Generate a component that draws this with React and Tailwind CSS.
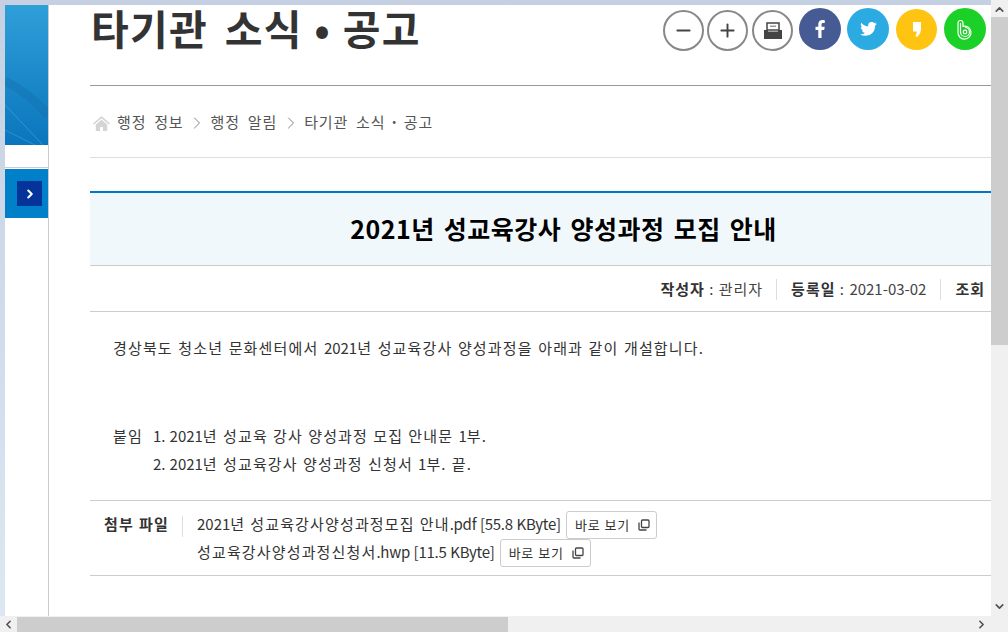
import React from "react";
import { ChevronUp, ChevronDown, ChevronLeft, ChevronRight, Minus, Plus } from "lucide-react";

function Round({ children, className }) {
  return <div className={"flex items-center justify-center rounded-full shrink-0 " + className}>{children}</div>;
}

function N({ children }) {
  return <span className="tracking-normal">{children}</span>;
}

function L({ children }) {
  return <span className="tracking-[-0.25px]">{children}</span>;
}

function ViewBtn() {
  return (
    <span className="inline-flex items-center h-[28px] ml-[5px] pl-[8px] pr-[6px] gap-[8px] border border-[#ccc] rounded-[3px] text-[13px] text-[#333] tracking-[0.75px] [word-spacing:0.5px] bg-white">
      바로 보기
      <svg width="12" height="12" viewBox="0 0 12 12" fill="none" stroke="#444" strokeWidth="1.3"><rect x="3.5" y="1" width="7.5" height="7.5" rx="1"/><path d="M1 3.5v6.5a1 1 0 0 0 1 1h6.5"/></svg>
    </span>
  );
}

export default function App() {
  return (
    <div className="w-[1008px] h-[632px] flex flex-col overflow-hidden bg-[#f0f0f0] text-[#333]" style={{ fontFamily: '"Noto Sans CJK KR", "Noto Sans", sans-serif' }}>
      <div className="flex h-[616px]">
        <div className="w-[991px] h-[616px] pt-[5px] pl-[5px] bg-linear-to-b from-[#c5d0e2] to-[#dce7f3] overflow-hidden">
          <div className="flex h-[611px] bg-white">
            {/* sidebar */}
            <aside className="w-[44px] shrink-0 border-r border-[#ccc] flex flex-col">
              <div className="h-[140px] overflow-hidden">
                <svg width="43" height="140" viewBox="0 0 43 140" preserveAspectRatio="none">
                  <defs>
                    <linearGradient id="g" x1="0" y1="0" x2="0" y2="1"><stop offset="0" stopColor="#2f9fd8"/><stop offset="1" stopColor="#0a75bd"/></linearGradient>
                  </defs>
                  <rect width="43" height="140" fill="url(#g)"/>
                  <path d="M0 76 Q24 88 43 110" stroke="#1470ac" strokeOpacity=".4" strokeWidth="9" fill="none"/>
                  <path d="M0 100 L38 140" stroke="#5cb0de" strokeOpacity=".5" strokeWidth="1" fill="none"/>
                  <path d="M0 125 L30 140" stroke="#5cb0de" strokeOpacity=".45" strokeWidth="1" fill="none"/>
                </svg>
              </div>
              <div className="h-[22px]"></div>
              <div className="h-px bg-[#ccc]"></div>
              <div className="h-px"></div>
              <div className="h-[49px] bg-[#0080c8] flex items-center pl-[12px]">
                <div className="w-[25px] h-[25px] bg-[#04349a] flex items-center justify-center">
                  <ChevronRight size={14} color="#fff" strokeWidth={3.5} />
                </div>
              </div>
            </aside>
            {/* content */}
            <main className="flex-1 pl-[41px] min-w-0">
              <div className="h-[81px] border-b border-[#999] flex justify-between items-start">
                <h1 className="text-[41px] font-bold leading-[44px] text-[#333] whitespace-nowrap tracking-[1.3px] [word-spacing:6px] pl-[1px]">타기관 소식<span className="[word-spacing:1px]"> • </span>공고</h1>
                <div className="flex items-center mt-[2px] w-[328px] shrink-0">
                  <Round className="w-[41px] h-[41px] mt-[3px] border-2 border-[#888] bg-white"><Minus size={21} color="#444" strokeWidth={2.2} /></Round>
                  <Round className="w-[41px] h-[41px] mt-[3px] border-2 border-[#888] bg-white ml-[3px]"><Plus size={21} color="#444" strokeWidth={2.2} /></Round>
                  <Round className="w-[41px] h-[41px] mt-[3px] border-2 border-[#888] bg-white ml-[4px]">
                    <svg width="20" height="18" viewBox="0 0 20 18"><path d="M4 1h12v7H4z" fill="#fff" stroke="#444" strokeWidth="1.5"/><path d="M7 3.500h6v1.500H7z" fill="#999"/><path d="M1 8h4v1.500h10V8h4v9H1z" fill="#444"/></svg>
                  </Round>
                  <Round className="w-[42px] h-[42px] bg-[#465a94] ml-[6px] text-white">
                    <svg width="10" height="18" viewBox="0 0 11 20" fill="#fff"><path d="M7.200 20v-9h3l.5-3.600H7.200V5.100c0-1 .3-1.700 1.700-1.700h1.900V.2C10.400.1 9.400 0 8.200 0 5.500 0 3.600 1.700 3.600 4.700v2.700H.5V11h3.100v9z"/></svg>
                  </Round>
                  <Round className="w-[42px] h-[42px] bg-[#2babe2] ml-[6px]">
                    <svg width="17" height="14" viewBox="0 0 24 20" fill="#fff"><path d="M24 2.400c-.9.400-1.800.700-2.800.8 1-.6 1.800-1.600 2.200-2.700-1 .6-2 1-3.100 1.200A4.900 4.900 0 0 0 11.800 6.200C7.700 6 4.100 4 1.700.9.300 3.200 1 6.100 3.200 7.600c-.8 0-1.600-.2-2.200-.6 0 2.300 1.600 4.400 3.900 4.900-.7.200-1.500.2-2.200.1.600 2 2.400 3.400 4.600 3.400A9.900 9.900 0 0 1 0 17.500 14 14 0 0 0 7.500 19.700c9.100 0 14.300-7.700 14-14.600 1-.7 1.800-1.600 2.500-2.700z"/></svg>
                  </Round>
                  <Round className="w-[41px] h-[41px] bg-[#ffc312] ml-[7px]">
                    <svg width="8" height="15" viewBox="0 0 8 15" fill="#fff"><path d="M0 0h8v7c0 3-1.500 6-4 8l-1.500-1c.7-1.500 1.200-2.800 1.300-4.500H0z"/></svg>
                  </Round>
                  <Round className="w-[42px] h-[42px] bg-[#1bd127] ml-[7px]">
                    <svg width="18" height="21" viewBox="0 0 18 21" fill="none" stroke="#fff" strokeWidth="1.200"><path d="M2 13V4a2.500 2.500 0 0 1 5 0v3.300A6.500 6.500 0 1 1 2 13z"/><path d="M4.500 4v9a4.500 4.500 0 1 0 4.500-4.500"/><circle cx="9" cy="13" r="1.800"/></svg>
                  </Round>
                </div>
              </div>
              <div className="h-[72px] pt-[2px] border-b border-[#ddd] flex items-center text-[15px] text-[#555] tracking-[0.9px] [word-spacing:3.5px]">
                <svg width="17" height="15" viewBox="0 0 17 15" className="ml-[3px] mr-[7px] mt-px" fill="#d4d4d4"><path d="M8.500 0 0 7.500l1 1 7.500-6.200L16 8.500l1-1z"/><path d="M2.800 8.500 8.500 3.800l5.700 4.700V15H10v-4H7v4H2.800z"/></svg>
                <span>행정 정보</span>
                <ChevronRight size={20} color="#777" strokeWidth={1.1} className="mx-[3.5px]" />
                <span>행정 알림</span>
                <ChevronRight size={20} color="#777" strokeWidth={1.1} className="mx-[3.5px]" />
                <span>타기관 소식<b className="font-bold [word-spacing:0px]"> · </b>공고</span>
              </div>
              <div className="mt-[33px] h-[75px] pl-[46px] border-t-2 border-[#0078c1] border-b border-b-[#ccc] bg-[#f0f8fb] flex items-center justify-center text-[25px] font-bold text-black tracking-[0.5px] [word-spacing:3px]">
                2021년 성교육강사 양성과정 모집 안내
              </div>
              <div className="h-[46px] pt-px border-b border-[#ccc] flex justify-end items-center text-[15px] text-[#444] pr-[6px] whitespace-nowrap tracking-[1px]">
                <span><b className="font-bold text-[#333]">작성자</b> : 관리자</span>
                <span className="w-px h-[21px] bg-[#ddd] ml-[13px] mr-[14px]"></span>
                <span><b className="font-bold text-[#333]">등록일</b> : <N>2021-03-02</N></span>
                <span className="w-px h-[21px] bg-[#ddd] mx-[14px]"></span>
                <b className="font-bold text-[#333]">조회</b>
              </div>
              <div className="h-[188px] pl-[23px] text-[15px] text-[#333] leading-[28px] pt-[22px] tracking-[1.15px] [word-spacing:1px]">
                <p>경상북도 청소년 문화센터에서 <N>2021</N>년 성교육강사 양성과정을 아래과 같이 개설합니다.</p>
                <div className="flex mt-[60px] [word-spacing:0.7px]">
                  <span className="w-[40px]">붙임</span>
                  <div>
                    <p><N>1. 2021</N>년 성교육 강사 양성과정 모집 안내문 <N>1</N>부.</p>
                    <p><N>2. 2021</N>년 성교육강사 양성과정 신청서 <N>1</N>부.&nbsp;끝.</p>
                  </div>
                </div>
              </div>
              <div className="h-[76px] border-y border-[#ccc] flex items-center text-[15px] whitespace-nowrap tracking-[1.15px] [word-spacing:0.5px]">
                <div className="w-[93px] h-[21px] mb-[24px] border-r border-[#ddd] pl-[14px] font-bold leading-[16px]">첨부 파일</div>
                <div className="pl-[14px] flex flex-col gap-0 pt-[1px]">
                  <div className="flex items-center"><N>2021</N>년 성교육강사양성과정모집 안내<L>.pdf [55.8 KByte]</L><ViewBtn /></div>
                  <div className="flex items-center">성교육강사양성과정신청서<L>.hwp [11.5 KByte]</L><ViewBtn /></div>
                </div>
              </div>
            </main>
          </div>
        </div>
        {/* vertical scrollbar */}
        <div className="w-[17px] flex flex-col items-center bg-[#f0f0f0]">
          <div className="h-[17px] pt-[3px] flex justify-center"><ChevronUp size={13} color="#505050" strokeWidth={3} /></div>
          <div className="w-[17px] h-[328px] bg-[#cdcdcd]"></div>
          <div className="flex-1"></div>
          <div className="h-[16px] flex justify-center"><ChevronDown size={13} color="#505050" strokeWidth={3} /></div>
        </div>
      </div>
      {/* horizontal scrollbar */}
      <div className="h-[16px] flex items-center bg-[#f0f0f0]">
        <div className="w-[17px] flex justify-center"><ChevronLeft size={13} color="#505050" strokeWidth={3} /></div>
        <div className="w-[491px] h-[15px] bg-[#cdcdcd]"></div>
        <div className="flex-1"></div>
        <div className="w-[34px] flex justify-start pl-[1px]"><ChevronRight size={13} color="#505050" strokeWidth={3} /></div>
      </div>
    </div>
  );
}
